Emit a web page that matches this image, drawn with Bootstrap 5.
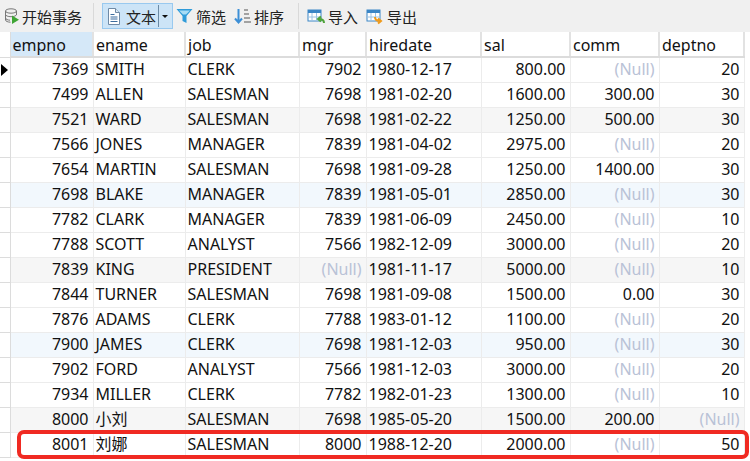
<!DOCTYPE html>
<html lang="zh">
<head>
<meta charset="utf-8">
<link href="https://cdn.jsdelivr.net/npm/bootstrap@5.3.0/dist/css/bootstrap.min.css" rel="stylesheet">
<style>
html,body{margin:0;height:461px;overflow:hidden;background:#fff}
body{font-family:"Noto Sans","Noto Sans CJK SC",sans-serif;font-size:16px;color:#111}
.tool-strip{height:32px;background:#f0f0f0;padding-left:4px}
.tool-item{font-size:15px;line-height:1;white-space:nowrap;color:#222}
.tool-item span{padding-top:2px}
.tool-item svg{flex:none}
.tool-item span.toggle-bar,.tool-item span.toggle-caret{padding-top:0}
.tool-sep{width:1px;height:26px;background:#d9d9d9}
.text-toggle{height:26px;width:71px;background:#cce4f7;border:1px solid #99c9ef}
.toggle-bar{width:1px;height:22px;background:#6a8aa5}
.toggle-caret{width:0;height:0;border-left:3px solid transparent;border-right:3px solid transparent;border-top:3px solid #111}
.data-wrap{height:429px;position:relative}
.emp-grid{table-layout:fixed;width:744px;margin:0;border-collapse:collapse;line-height:22px}
.emp-grid th,.emp-grid td{height:25px;padding:0 4px 2px 2px;border:0;border-right:1px solid #ececec;border-bottom:1px solid #ececec;white-space:nowrap;overflow:hidden;font-weight:400;color:#111;background:#fff;box-shadow:none;vertical-align:middle}
.emp-grid th{padding:2px 4px 0 2px;border-right:2px solid #e2e2e2;border-bottom:2px solid #dcdcdc}
.emp-grid th.pick{background:#d5e8f8}
.emp-grid td.gut,.emp-grid th.gut{padding:0;border-right:1px solid #dcdcdc;border-bottom:1px solid #dcdcdc;background:#fff}
.emp-grid tr.alt td{background:#f6f6f6}
.emp-grid tr.alt td.gut,.emp-grid tr.sel td.gut{background:#fff}
.emp-grid tr.sel td{background:#f2f8fd}
.num{text-align:right}
.emp-grid td.nul{color:#b9c2d6}
.cur{width:0;height:0;border-top:6px solid transparent;border-bottom:6px solid transparent;border-left:7px solid #000;margin-left:1px}
.red-mark{position:absolute;left:17px;top:398px;width:732px;height:29px;border:4px solid #f02a22;border-radius:7px;pointer-events:none}
</style>
</head>
<body>
<div class="tool-strip d-flex align-items-center">
  <div class="tool-item d-flex align-items-center" style="gap:3px;width:89px">
    <svg width="15" height="18" viewBox="0 0 15 18"><ellipse cx="7" cy="4" rx="5.500" ry="2.200" fill="#eee" stroke="#777"/><path d="M1.500 4v9c0 1.200 2.500 2.200 5 2.200M12.500 4v4M1.500 7.500c0 1.200 2.500 2.200 5.500 2.200s5.500-1 5.500-2.200M1.500 11c0 1.200 2.500 2.200 4.500 2.200" fill="none" stroke="#777"/><path d="M8 8.500l7 4.200-7 4.300z" fill="#3fa535"/></svg>
    <span>开始事务</span>
  </div>
  <div class="tool-sep me-2"></div>
  <div class="text-toggle tool-item d-flex align-items-center">
    <svg class="ms-1" width="14" height="17" viewBox="0 0 14 17"><path d="M1.500.5h7l4 4v12h-11z" fill="#fff" stroke="#6f8aa6"/><path d="M8.500.5v4h4" fill="#dce8f3" stroke="#6f8aa6"/><path d="M3.500 6.500h4M3.500 9h7M3.500 11h7M3.500 13.500h7" stroke="#3d6d9e"/></svg>
    <span style="margin-left:5px">文本</span>
    <span class="toggle-bar" style="margin-left:2px"></span>
    <span class="toggle-caret" style="margin-left:3px"></span>
  </div>
  <div class="tool-item d-flex align-items-center" style="gap:3px;width:58px;margin-left:3px">
    <svg width="17" height="16" viewBox="0 0 17 16"><path d="M.5 1h16l-6 7v7l-4-2V8z" fill="#2f9bd9"/><path d="M3 2.500h11l-4 4H7z" fill="#a8dcf5"/></svg>
    <span>筛选</span>
  </div>
  <div class="tool-item d-flex align-items-center" style="gap:3px;width:64px">
    <svg width="17" height="17" viewBox="0 0 17 17"><path d="M4.500 1v13M1 10.500l3.500 4 3.500-4" fill="none" stroke="#3d8fd6" stroke-width="2"/><path d="M10 2h4M10 6h5M10 10h6M10 14h7" stroke="#555"/></svg>
    <span>排序</span>
  </div>
  <div class="tool-sep me-2"></div>
  <div class="tool-item d-flex align-items-center" style="gap:3px;width:59px">
    <svg width="18" height="17" viewBox="0 0 18 17"><rect x="1" y="2" width="13" height="11" fill="#fff" stroke="#3b86c6"/><path d="M1 2h13v3H1z" fill="#3b86c6"/><path d="M5 5v8M9.500 5v8M1 9h13" stroke="#9cc3e4"/><path d="M17 15c0-3-2-4-5-4M14 8.500l-3 2.500 3 2.500" fill="none" stroke="#4fa33a" stroke-width="2"/></svg>
    <span>导入</span>
  </div>
  <div class="tool-item d-flex align-items-center" style="gap:3px">
    <svg width="18" height="17" viewBox="0 0 18 17"><rect x="1" y="2" width="13" height="11" fill="#fff" stroke="#3b86c6"/><path d="M1 2h13v3H1z" fill="#3b86c6"/><path d="M5 5v8M9.500 5v8M1 9h13" stroke="#9cc3e4"/><path d="M9 9c0 3 2 4 5 4M12 10.500l3 2.500-3 2.500" fill="none" stroke="#ef9a1a" stroke-width="2"/></svg>
    <span>导出</span>
  </div>
</div>
<div class="data-wrap">
<table class="table emp-grid">
<colgroup><col style="width:10px"><col style="width:83px"><col style="width:92px"><col style="width:114px"><col style="width:67px"><col style="width:115px"><col style="width:89px"><col style="width:89px"><col style="width:85px"></colgroup>
<thead><tr><th class="gut"></th><th class="pick">empno</th><th>ename</th><th>job</th><th>mgr</th><th>hiredate</th><th>sal</th><th>comm</th><th>deptno</th></tr></thead>
<tbody>
<tr><td class="gut"><div class="cur"></div></td><td class="num">7369</td><td>SMITH</td><td>CLERK</td><td class="num">7902</td><td>1980-12-17</td><td class="num">800.00</td><td class="num nul">(Null)</td><td class="num">20</td></tr>
<tr><td class="gut"></td><td class="num">7499</td><td>ALLEN</td><td>SALESMAN</td><td class="num">7698</td><td>1981-02-20</td><td class="num">1600.00</td><td class="num">300.00</td><td class="num">30</td></tr>
<tr class="alt"><td class="gut"></td><td class="num">7521</td><td>WARD</td><td>SALESMAN</td><td class="num">7698</td><td>1981-02-22</td><td class="num">1250.00</td><td class="num">500.00</td><td class="num">30</td></tr>
<tr><td class="gut"></td><td class="num">7566</td><td>JONES</td><td>MANAGER</td><td class="num">7839</td><td>1981-04-02</td><td class="num">2975.00</td><td class="num nul">(Null)</td><td class="num">20</td></tr>
<tr><td class="gut"></td><td class="num">7654</td><td>MARTIN</td><td>SALESMAN</td><td class="num">7698</td><td>1981-09-28</td><td class="num">1250.00</td><td class="num">1400.00</td><td class="num">30</td></tr>
<tr class="sel"><td class="gut"></td><td class="num">7698</td><td>BLAKE</td><td>MANAGER</td><td class="num">7839</td><td>1981-05-01</td><td class="num">2850.00</td><td class="num nul">(Null)</td><td class="num">30</td></tr>
<tr><td class="gut"></td><td class="num">7782</td><td>CLARK</td><td>MANAGER</td><td class="num">7839</td><td>1981-06-09</td><td class="num">2450.00</td><td class="num nul">(Null)</td><td class="num">10</td></tr>
<tr><td class="gut"></td><td class="num">7788</td><td>SCOTT</td><td>ANALYST</td><td class="num">7566</td><td>1982-12-09</td><td class="num">3000.00</td><td class="num nul">(Null)</td><td class="num">20</td></tr>
<tr class="alt"><td class="gut"></td><td class="num">7839</td><td>KING</td><td>PRESIDENT</td><td class="num nul">(Null)</td><td>1981-11-17</td><td class="num">5000.00</td><td class="num nul">(Null)</td><td class="num">10</td></tr>
<tr><td class="gut"></td><td class="num">7844</td><td>TURNER</td><td>SALESMAN</td><td class="num">7698</td><td>1981-09-08</td><td class="num">1500.00</td><td class="num">0.00</td><td class="num">30</td></tr>
<tr><td class="gut"></td><td class="num">7876</td><td>ADAMS</td><td>CLERK</td><td class="num">7788</td><td>1983-01-12</td><td class="num">1100.00</td><td class="num nul">(Null)</td><td class="num">20</td></tr>
<tr class="sel"><td class="gut"></td><td class="num">7900</td><td>JAMES</td><td>CLERK</td><td class="num">7698</td><td>1981-12-03</td><td class="num">950.00</td><td class="num nul">(Null)</td><td class="num">30</td></tr>
<tr><td class="gut"></td><td class="num">7902</td><td>FORD</td><td>ANALYST</td><td class="num">7566</td><td>1981-12-03</td><td class="num">3000.00</td><td class="num nul">(Null)</td><td class="num">20</td></tr>
<tr><td class="gut"></td><td class="num">7934</td><td>MILLER</td><td>CLERK</td><td class="num">7782</td><td>1982-01-23</td><td class="num">1300.00</td><td class="num nul">(Null)</td><td class="num">10</td></tr>
<tr class="alt"><td class="gut"></td><td class="num">8000</td><td>小刘</td><td>SALESMAN</td><td class="num">7698</td><td>1985-05-20</td><td class="num">1500.00</td><td class="num">200.00</td><td class="num nul">(Null)</td></tr>
<tr><td class="gut"></td><td class="num">8001</td><td>刘娜</td><td>SALESMAN</td><td class="num">8000</td><td>1988-12-20</td><td class="num">2000.00</td><td class="num nul">(Null)</td><td class="num">50</td></tr>
</tbody>
</table>
<div class="red-mark"></div>
</div>
<script src="https://cdn.jsdelivr.net/npm/bootstrap@5.3.0/dist/js/bootstrap.bundle.min.js"></script>
</body>
</html>
